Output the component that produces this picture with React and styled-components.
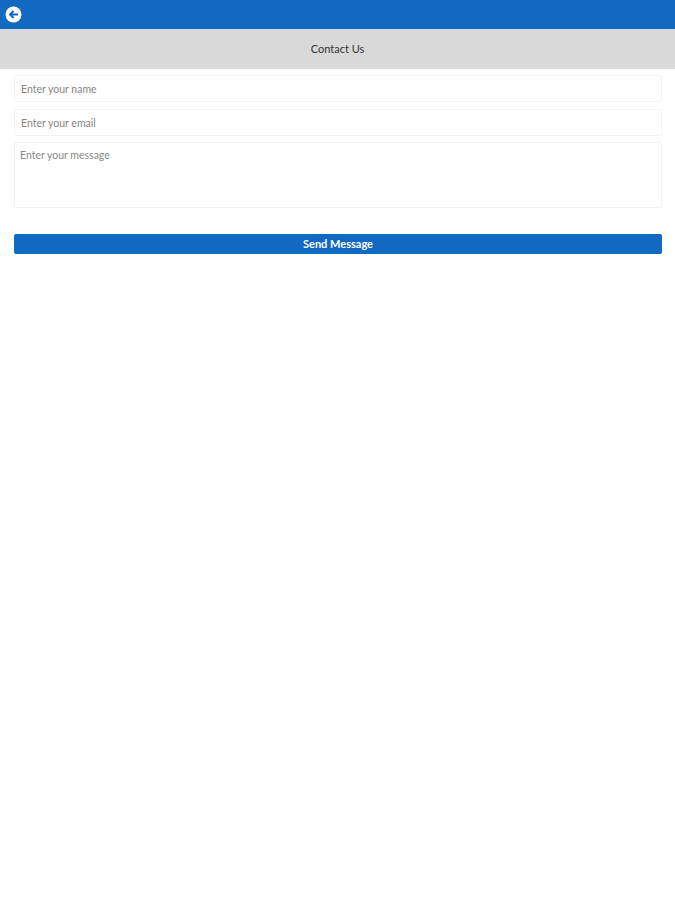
import styled, { createGlobalStyle } from "styled-components";

const GlobalStyle = createGlobalStyle`
  html, body {
    margin: 0;
    padding: 0;
    background: #fff;
    font-family: Lato, "Open Sans", sans-serif;
  }
  * {
    box-sizing: border-box;
  }
`;

const Page = styled.div`
  width: 675px;
  min-height: 900px;
  background: #fff;
`;

const TopBar = styled.header`
  height: 29px;
  background: #1269c1;
  display: flex;
  align-items: center;
  padding-left: 5px;
`;

const BackButton = styled.button`
  width: 17px;
  height: 17px;
  padding: 0;
  border: 0;
  background: none;
  display: flex;
`;

const TitleBar = styled.div`
  height: 40px;
  padding-bottom: 2px;
  background: #d9d9d9;
  display: flex;
  align-items: center;
  justify-content: center;
  font-size: 11px;
  color: #333;
`;

const Form = styled.form`
  display: flex;
  flex-direction: column;
  padding: 6px 13px 0 14px;
`;

const Input = styled.input`
  height: 27px;
  margin-bottom: ${(p) => p.$gap}px;
  padding: 0 6px;
  border: 1px solid #f3f3f3;
  border-radius: 3px;
  outline: none;
  font-family: inherit;
  font-size: 10.5px;
  &::placeholder {
    color: #858585;
    opacity: 1;
  }
`;

const Message = styled.textarea`
  height: 66px;
  padding: 6px 5px;
  border: 1px solid #f1f1f1;
  border-radius: 2px;
  outline: none;
  resize: none;
  font-family: inherit;
  font-size: 10.5px;
  &::placeholder {
    color: #8a8a8a;
    opacity: 1;
  }
`;

const SendButton = styled.button`
  height: 20px;
  margin-top: 26px;
  padding: 0 0 1px;
  border: 0;
  border-radius: 2px;
  background: #1269c1;
  color: #fff;
  font-family: inherit;
  font-size: 11px;
  font-weight: 700;
`;

const BackIcon = () => (
  <svg viewBox="0 0 17 17" width="17" height="17">
    <circle cx="8.5" cy="8.5" r="8" fill="#fff" />
    <path
      d="M13 8.5H6M8.6 5 5 8.5l3.6 3.5"
      fill="none"
      stroke="#1269c1"
      strokeWidth="2"
    />
  </svg>
);

export default function App() {
  return (
    <Page>
      <GlobalStyle />
      <TopBar>
        <BackButton type="button" aria-label="Back">
          <BackIcon />
        </BackButton>
      </TopBar>
      <TitleBar>Contact Us</TitleBar>
      <Form>
        <Input $gap={7} placeholder="Enter your name" />
        <Input $gap={6} placeholder="Enter your email" />
        <Message placeholder="Enter your message" />
        <SendButton type="button">Send Message</SendButton>
      </Form>
    </Page>
  );
}
